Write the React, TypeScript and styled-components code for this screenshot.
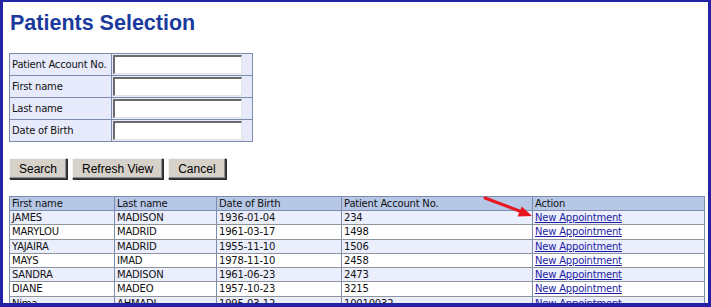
import styled, {createGlobalStyle} from 'styled-components'

const GlobalStyle = createGlobalStyle`
    html, body {
        margin: 0;
        padding: 0;
        background: #ffffff;
    }
`

const patients = [
    {first: 'JAMES', last: 'MADISON', dob: '1936-01-04', account: '234'},
    {first: 'MARYLOU', last: 'MADRID', dob: '1961-03-17', account: '1498'},
    {first: 'YAJAIRA', last: 'MADRID', dob: '1955-11-10', account: '1506'},
    {first: 'MAYS', last: 'IMAD', dob: '1978-11-10', account: '2458'},
    {first: 'SANDRA', last: 'MADISON', dob: '1961-06-23', account: '2473'},
    {first: 'DIANE', last: 'MADEO', dob: '1957-10-23', account: '3215'},
    {first: 'Nima', last: 'AHMADI', dob: '1995-03-12', account: '10010032'},
]

const searchFields = ['Patient Account No.', 'First name', 'Last name', 'Date of Birth']

const columns = [
    {title: 'First name', width: 105},
    {title: 'Last name', width: 102},
    {title: 'Date of Birth', width: 125},
    {title: 'Patient Account No.', width: 191},
    {title: 'Action', width: 172},
]

export default function App() {
    return (
        <>
            <GlobalStyle/>
            <Frame>
                <Title>Patients Selection</Title>

                <SearchTable>
                    <tbody>
                    {searchFields.map(label => (
                        <tr key={label}>
                            <LabelCell>{label}</LabelCell>
                            <InputCell><TextInput type="text"/></InputCell>
                        </tr>
                    ))}
                    </tbody>
                </SearchTable>

                <ButtonRow>
                    <Button>Search</Button>
                    <Button>Refresh View</Button>
                    <Button>Cancel</Button>
                </ButtonRow>

                <ResultsTable>
                    <colgroup>
                        {columns.map(c => <col key={c.title} style={{width: c.width}}/>)}
                    </colgroup>
                    <thead>
                    <tr>
                        {columns.map(c => <HeadCell key={c.title}>{c.title}</HeadCell>)}
                    </tr>
                    </thead>
                    <tbody>
                    {patients.map((p, i) => (
                        <Row key={p.account} $alt={i % 2 === 0}>
                            <Cell>{p.first}</Cell>
                            <Cell>{p.last}</Cell>
                            <Cell>{p.dob}</Cell>
                            <Cell>{p.account}</Cell>
                            <Cell><ActionLink href="#">New Appointment</ActionLink></Cell>
                        </Row>
                    ))}
                    </tbody>
                </ResultsTable>

                <Arrow width="56" height="28" viewBox="0 0 56 28">
                    <line x1="5" y1="4" x2="42" y2="18" stroke="#e8161e" strokeWidth="3" strokeLinecap="round"/>
                    <polygon points="52,22 37.6,22.4 41.8,12.4" fill="#e8161e"/>
                </Arrow>
            </Frame>
        </>
    )
}

const Frame = styled.div`
    position: relative;
    box-sizing: border-box;
    width: 711px;
    height: 307px;
    overflow: hidden;
    border-style: solid;
    border-color: #2323a3;
    border-width: 2px 3px 4px 3px;
    padding: 9px 0 0 6px;
    background: #ffffff;
`

const Title = styled.h1`
    margin: 0;
    font-family: "Liberation Sans", Arial, sans-serif;
    font-size: 21.5px;
    line-height: 25px;
    font-weight: bold;
    color: #1b3a9e;
    padding-left: 1px;
`

const SearchTable = styled.table`
    margin-top: 17px;
    border-collapse: collapse;
    border: 1px solid #7d8cab;
    width: 244px;
`

const LabelCell = styled.td`
    width: 99px;
    padding: 0 0 0 2px;
    border: 1px solid #7d8cab;
    background: #e6eafb;
    font-family: "DejaVu Sans", Verdana, sans-serif;
    font-size: 10px;
    letter-spacing: -0.2px;
    color: #111111;
    white-space: nowrap;
`

const InputCell = styled.td`
    padding: 1px 0 1px 1px;
    border: 1px solid #7d8cab;
    background: #e6eafb;
    line-height: 0;
`

const TextInput = styled.input`
    box-sizing: border-box;
    width: 129px;
    height: 19px;
    margin: 0;
    padding: 0 2px;
    border-style: solid;
    border-width: 2px 1px 1px 2px;
    border-color: #6a6a6a #e2e2e2 #e2e2e2 #6a6a6a;
    background: #ffffff;
    outline: none;
`

const ButtonRow = styled.div`
    display: flex;
    gap: 5px;
    margin-top: 16px;
`

const Button = styled.button`
    box-sizing: border-box;
    height: 21px;
    margin: 0;
    padding: 0 9px;
    font-family: "Liberation Sans", Arial, sans-serif;
    font-size: 12px;
    color: #000000;
    background: #d6d2ca;
    border: 1px solid #3c3c3c;
    border-top-color: #f4f4f4;
    border-left-color: #f4f4f4;
    box-shadow: inset -1px -1px 0 #8a8a8a, 1px 1px 0 #2a2a2a;
    cursor: pointer;
`

const ResultsTable = styled.table`
    margin-top: 17px;
    width: 695px;
    table-layout: fixed;
    border-collapse: collapse;
    border: 1px solid #7d8cab;
    font-family: "DejaVu Sans", Verdana, sans-serif;
    font-size: 10px;
    letter-spacing: -0.2px;
    color: #111111;
`

const HeadCell = styled.th`
    padding: 0 0 0 2px;
    height: 13px;
    line-height: 13px;
    text-align: left;
    font-weight: normal;
    background: #b7c7e6;
    border: 1px solid #7d8cab;
    white-space: nowrap;
`

const Row = styled.tr<{ $alt: boolean }>`
    background: ${p => (p.$alt ? '#ebeefc' : '#ffffff')};
`

const Cell = styled.td`
    padding: 0 0 0 2px;
    height: 13.3px;
    line-height: 13.3px;
    border-top: 1px solid #8f949c;
    border-bottom: 1px solid #8f949c;
    border-left: 1px solid #7d8cab;
    border-right: 1px solid #7d8cab;
    white-space: nowrap;
    overflow: hidden;
`

const ActionLink = styled.a`
    color: #1c1ca4;
    text-decoration: underline;
`

const Arrow = styled.svg`
    position: absolute;
    left: 477px;
    top: 192px;
`
